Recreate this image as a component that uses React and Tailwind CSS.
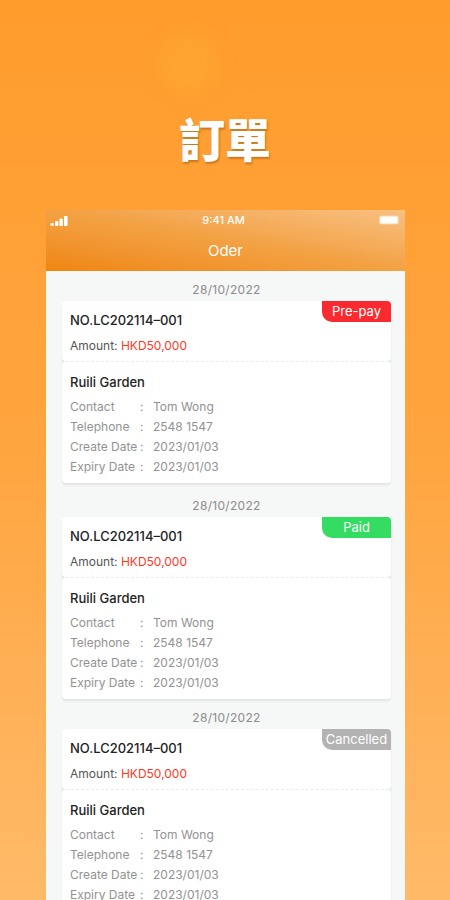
import React from 'react';
import { clsx } from 'clsx';

const details = [
  { label: 'Contact', value: 'Tom Wong' },
  { label: 'Telephone', value: '2548 1547' },
  { label: 'Create Date', value: '2023/01/03' },
  { label: 'Expiry Date', value: '2023/01/03' },
];

const orders = [
  { id: 1, status: 'Pre-pay', badge: 'bg-[#fa2a31]', spacing: 'pt-2' },
  { id: 2, status: 'Paid', badge: 'bg-[#35dc62]', spacing: 'pt-3' },
  { id: 3, status: 'Cancelled', badge: 'bg-[#b3b3b3]', spacing: 'pt-2' },
];

const SignalIcon = () => (
  <svg width="18" height="12" viewBox="0 0 18 12" fill="white" aria-hidden="true">
    <rect x="0.5" y="9" width="3.2" height="3" rx="0.8" />
    <rect x="5" y="7" width="3.4" height="5" rx="0.8" />
    <rect x="9.5" y="4.5" width="3.4" height="7.5" rx="0.8" />
    <rect x="14" y="2" width="3.6" height="10" rx="0.8" />
  </svg>
);

const BatteryIcon = () => (
  <svg width="20" height="10" viewBox="0 0 20 10" fill="white" aria-hidden="true">
    <rect x="0" y="0.5" width="20" height="9" rx="2.5" opacity="0.35" />
    <rect x="1" y="1.5" width="17.5" height="7" rx="1" />
  </svg>
);

const OrderCard = ({ status, badge, spacing }) => (
  <section className={spacing}>
    <p className="h-[22px] text-center text-xs leading-[22px] tracking-wide text-[#8c8c8c]">28/10/2022</p>

    <article className="rounded bg-[#e6e8e8] shadow-[0_2px_2px_rgba(0,0,0,0.08)]">
      <div className="relative rounded bg-white px-2 pt-2 pb-1">
        <span
          className={clsx(
            'absolute top-0 right-0 h-[21px] w-[69px] rounded-tr rounded-bl-[10px] text-center text-[13px] leading-[21px] text-white',
            badge
          )}
        >
          {status}
        </span>
        <h2 className="text-[13px] leading-[22px] font-medium text-[#222]">NO.LC202114–001</h2>
        <p className="pt-1 text-xs leading-[22px] text-[#555]">
          Amount: <span className="text-[#ff3826]">HKD50,000</span>
        </p>
      </div>

      <div className="rounded border-t border-dashed border-[#ececec] bg-white px-2 pt-[9px] pb-1.5">
        <h3 className="pb-1 text-[13px] leading-[22px] font-medium text-[#222]">Ruili Garden</h3>
        <dl className="text-xs leading-5 text-[#929292]">
          {details.map(({ label, value }) => (
            <div key={label} className="flex">
              <dt className="flex w-[83px] shrink-0">
                <span className="w-[70px]">{label}</span>
                <span>:</span>
              </dt>
              <dd>{value}</dd>
            </div>
          ))}
        </dl>
      </div>
    </article>
  </section>
);

export default function App() {
  return (
    <main className="relative flex h-screen flex-col overflow-hidden bg-linear-to-b from-[#ff9c2c] via-[#ffa53f] to-[#ffba68] font-['Inter',sans-serif]">
      <div className="absolute top-8 left-[158px] size-[62px] rounded-full bg-[#ffae35]/35 blur-sm" />

      <h1 className="relative pt-[102px] pb-[38px] text-center font-['Noto_Sans_CJK_TC',sans-serif] text-[46px] leading-[70px] font-black text-white [text-shadow:1px_2px_2px_rgba(130,70,0,0.45)]">
        訂單
      </h1>

      <div className="mr-[45px] ml-[46px] min-h-0 flex-1 bg-[#f6f7f7]">
        <header className="bg-linear-to-tr from-[#ef860b] via-[#f3a142] to-[#f8c080] text-white">
          <div className="flex items-center justify-between px-1 pr-1.5 text-[11px] leading-5 font-medium">
            <SignalIcon />
            <span>9:41 AM</span>
            <BatteryIcon />
          </div>
          <p className="pt-[9px] pb-2 text-center text-[15px] leading-6">Oder</p>
        </header>

        <div className="pr-[14px] pl-4">
          {orders.map((order) => (
            <OrderCard key={order.id} {...order} />
          ))}
        </div>
      </div>
    </main>
  );
}
